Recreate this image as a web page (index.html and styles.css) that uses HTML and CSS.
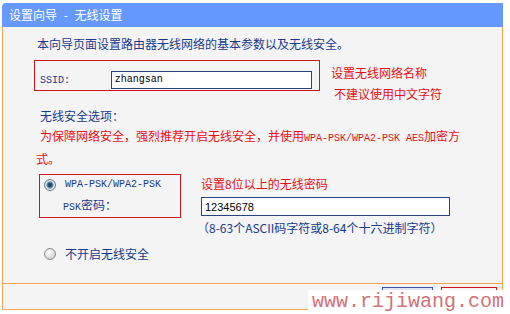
FILE: index.html
```html
<!DOCTYPE html>
<html lang="zh-CN">
<head>
  <meta charset="UTF-8" />
  <title>设置向导 - 无线设置</title>
  <link rel="stylesheet" href="styles.css">
</head>
<body>

<div class="wizard">
  <div class="title">设置向导 - 无线设置</div>

  <div class="panel">
    <div class="intro">本向导页面设置路由器无线网络的基本参数以及无线安全。</div>

    <div class="row">
      <div class="mark-box ssid-box">
        <label class="mono ssid-label">SSID:</label>
        <input type="text" class="field ssid-field" value="zhangsan">
      </div>
      <div class="notes">
        <div class="note">设置无线网络名称</div>
        <div class="note note-second">不建议使用中文字符</div>
      </div>
    </div>

    <div class="heading">无线安全选项：</div>
    <div class="warning">为保障网络安全，强烈推荐开启无线安全，并使用<span class="mono">WPA-PSK/WPA2-PSK AES</span>加密方式。</div>

    <div class="row psk-row">
      <div class="mark-box psk-box">
        <div class="option">
          <span class="radio on"></span>
          <span class="mono">WPA-PSK/WPA2-PSK</span>
        </div>
        <div class="psk-label"><span class="mono">PSK</span>密码：</div>
      </div>
      <div class="psk-col">
        <div class="note">设置8位以上的无线密码</div>
        <input type="text" class="field psk-field" value="12345678">
        <div class="hint">（8-63个ASCII码字符或8-64个十六进制字符）</div>
      </div>
    </div>

    <div class="option off-option">
      <span class="radio"></span>
      <span>不开启无线安全</span>
    </div>
  </div>

  <div class="bar">
    <button class="btn btn-back">上一步</button>
    <button class="btn btn-next">下一步</button>
  </div>
</div>

<div class="watermark">www.rijiwang.com</div>

</body>
</html>
```

FILE: styles.css
```css
body {
  margin: 0;
  background: #fff;
  font-family: "Noto Sans CJK SC", sans-serif;
  font-size: 12px;
  line-height: 16px;
  color: #183a8a;
}

.mono {
  font-family: "Liberation Mono", "Noto Sans CJK SC", monospace;
  font-size: 10px;
}

.wizard {
  width: 501px;
  margin: 3px 0 0 2px;
}

.title {
  height: 24px;
  line-height: 24px;
  padding-left: 7px;
  background: #6699ff;
  color: #fff;
  border-radius: 4px 0 0 0;
  word-spacing: 4px;
}

.panel {
  height: 256px;
  padding-left: 31px;
  background: #f4f4f4;
  border-left: 1px solid #f5a352;
  border-right: 1px solid #f5a352;
  overflow: hidden;
}

.intro {
  margin: 9px 0 0 3px;
}

.row {
  display: flex;
  align-items: flex-start;
}

.intro + .row {
  margin-top: 8px;
}

.mark-box {
  border: 1px solid #d0141c;
}

.ssid-box {
  width: 272px;
  height: 21px;
  display: flex;
  align-items: center;
  padding: 8px 7px 0 5px;
}

.ssid-label {
  width: 71px;
  padding-top: 2px;
}

.field {
  height: 18px;
  padding: 0 3px;
  margin: 0;
  border: 1px solid #26427f;
  background: #fff;
  color: #000;
  box-sizing: border-box;
  outline: none;
}

.ssid-field {
  width: 202px;
  font-family: "Liberation Mono", monospace;
  font-size: 10px;
}

.notes {
  margin-left: 11px;
}

.note {
  margin-top: 5px;
  color: #e60f14;
}

.note-second {
  margin-left: 3px;
}

.heading {
  margin: 6px 0 0 6px;
}

.warning {
  width: 440px;
  margin: 2px 0 0 2px;
  line-height: 20px;
  text-indent: 4px;
  color: #e60f14;
}

.psk-row {
  margin: 5px 0 0 5px;
}

.psk-box {
  width: 142px;
  height: 44px;
  padding: 2px 0 4px 4px;
  box-sizing: border-box;
}

.option {
  display: flex;
  align-items: center;
}

.radio {
  width: 12px;
  height: 12px;
  margin-right: 9px;
  border-radius: 50%;
  border: 1px solid #8c8c8c;
  box-sizing: border-box;
  background: radial-gradient(circle at 40% 35%, #ffffff, #d2d2d2 70%, #b8b8b8);
}

.radio.on {
  border-color: #6e7f8c;
  background: radial-gradient(circle, #163e5c 0, #2c5f80 2.2px, #8fb0c4 3.4px, #e8eef2 4.2px, #c3cbd1 6px);
}

.psk-label {
  margin: 4px 0 0 19px;
}

.psk-col {
  margin-left: 20px;
  padding-top: 2px;
}

.psk-col .note {
  margin-top: 0;
}

.psk-field {
  display: block;
  width: 249px;
  height: 19px;
  margin-top: 5px;
  font-family: "Liberation Sans", sans-serif;
  font-size: 11px;
}

.hint {
  margin: 4px 0 0 -4px;
}

.off-option {
  margin: 10px 0 0 10px;
}

.bar {
  height: 27px;
  padding: 3px 5px 0 0;
  box-sizing: border-box;
  display: flex;
  justify-content: flex-end;
  gap: 8px;
  background: #f4f4f4;
  border: 1px solid #f5a352;
}

.btn {
  height: 20px;
  padding: 0;
  font-family: "Noto Sans CJK SC", sans-serif;
  font-size: 12px;
  color: #000;
  line-height: 18px;
}

.btn-back {
  width: 51px;
  background: #dfe3f5;
  border: 1px solid #3a58a8;
}

.btn-next {
  width: 56px;
  background: #f6f6f6;
  border: 1px solid #d0141c;
}

.watermark {
  position: absolute;
  left: 308px;
  top: 290px;
  width: 198px;
  height: 24px;
  padding-left: 4px;
  background: #fff;
  font-family: "Liberation Mono", monospace;
  font-size: 20px;
  line-height: 24px;
  color: #d0737a;
}
```
